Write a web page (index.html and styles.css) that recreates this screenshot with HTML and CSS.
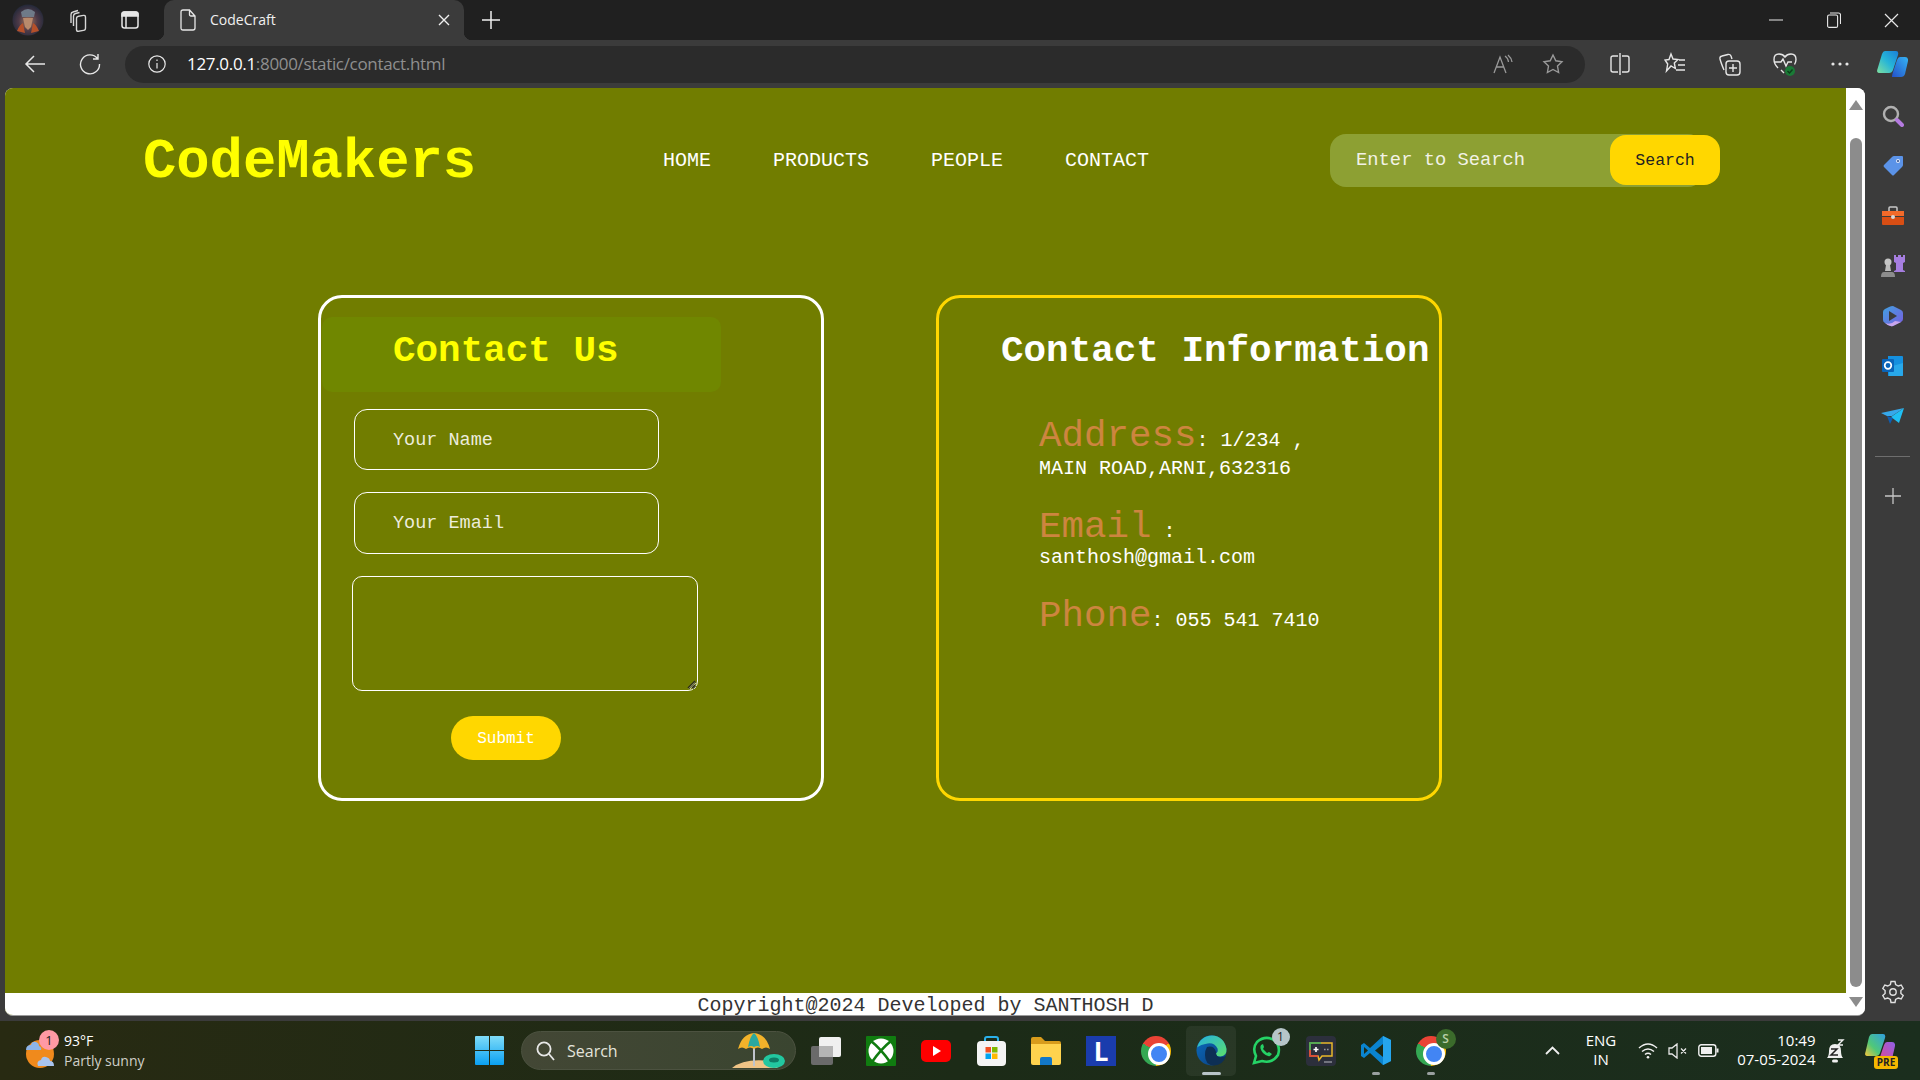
FILE: index.html
```html
<!DOCTYPE html>
<html lang="en">
<head>
<meta charset="utf-8">
<title>CodeCraft</title>
<link rel="stylesheet" href="styles.css">
</head>
<body>
<div class="tabstrip">
  <div class="avatar-btn"><svg width="32" height="32" viewBox="0 0 32 32"><defs><radialGradient id="av" cx="50%" cy="55%" r="55%"><stop offset="0" stop-color="#a8765a"/><stop offset=".55" stop-color="#4d3a48"/><stop offset="1" stop-color="#232838"/></radialGradient></defs><ellipse cx="16" cy="16" rx="15.500" ry="15.500" fill="url(#av)"/><path d="M9 8q7-6 14 0l-1 5H10z" fill="#6f7a88"/><path d="M11 14h10l-2 9-3 3-3-3z" fill="#b98a6c"/><path d="M5 27q3-7 6-8l2 10zM27 27q-3-7-6-8l-2 10z" fill="#b5502a"/></svg></div>
  <div class="strip-btn"><svg width="24" height="24" viewBox="0 0 24 24" fill="none" stroke="#d6d6d6" stroke-width="1.400"><path d="M5 15V6.500Q5 4.500 7 4l5-1.500M7.500 18V8q0-2 2-2.500l4-1"/><rect x="10.500" y="7" width="9" height="15" rx="2" transform="skewY(-10) translate(0 3.500)"/></svg></div>
  <div class="strip-btn"><svg width="20" height="20" viewBox="0 0 20 20" fill="none" stroke="#e6e6e6" stroke-width="1.500"><rect x="2" y="2" width="16" height="16" rx="2.500"/><path d="M2 4.500Q2 2 4.500 2h11Q18 2 18 4.500V6H2z" fill="#e6e6e6"/><path d="M6 6v12"/></svg></div>
  <div class="tab">
    <svg width="16" height="22" viewBox="0 0 16 22" fill="none" stroke="#e8e8e8" stroke-width="1.300"><path d="M3 1h6.500L15 7v12q0 2-2 2H3q-2 0-2-2V3q0-2 2-2zM9.500 1v4.500q0 1.500 1.500 1.500h4"/></svg>
    <span class="tab-title">CodeCraft</span>
    <svg class="tab-close" width="12" height="12" viewBox="0 0 12 12" stroke="#f0f0f0" stroke-width="1.400"><path d="M1 1l10 10M11 1L1 11"/></svg>
  </div>
  <div class="newtab"><svg width="18" height="18" viewBox="0 0 18 18" stroke="#f0f0f0" stroke-width="1.500"><path d="M9 0v18M0 9h18"/></svg></div>
  <div class="spacer"></div>
  <div class="winbtn"><svg width="14" height="2" viewBox="0 0 14 2" stroke="#e8e8e8"><path d="M0 1h14"/></svg></div>
  <div class="winbtn"><svg width="14" height="16" viewBox="0 0 14 16" fill="none" stroke="#e8e8e8" stroke-width="1.100"><rect x=".6" y="3" width="10" height="12.400" rx="1.500"/><path d="M3 1h8.500q2 0 2 2v9"/></svg></div>
  <div class="winbtn"><svg width="15" height="15" viewBox="0 0 15 15" stroke="#e8e8e8" stroke-width="1.200"><path d="M1 1l13 13M14 1L1 14"/></svg></div>
</div>

<div class="toolbar">
  <div class="nav-btn"><svg width="22" height="20" viewBox="0 0 22 20" fill="none" stroke="#e8e8e8" stroke-width="1.500"><path d="M21 10H2M10 2l-8 8 8 8"/></svg></div>
  <div class="nav-btn"><svg width="22" height="22" viewBox="0 0 22 22" fill="none" stroke="#e8e8e8" stroke-width="1.400"><path d="M18.500 5.500A9.500 9.500 0 1 0 20.500 11M19 1v5h-5"/></svg></div>
  <div class="addressbar">
    <svg class="info" width="18" height="18" viewBox="0 0 18 18" fill="none" stroke="#e8e8e8" stroke-width="1.200"><circle cx="9" cy="9" r="8.200"/><path d="M9 8v5.500M9 4.500v1.500"/></svg>
    <span class="url"><span class="url-host">127.0.0.1</span>:8000/static/contact.html</span>
    <div class="spacer"></div>
    <div class="addr-btn"><svg width="20" height="20" viewBox="0 0 20 20" fill="none" stroke="#9a9a9a" stroke-width="1.300"><path d="M1 19L7 3l6 16M3.500 13h7M12 2q3 2 3.500 6M15 1q3.500 3 4 7"/></svg></div>
    <div class="addr-btn"><svg width="22" height="22" viewBox="0 0 22 22" fill="none" stroke="#9a9a9a" stroke-width="1.400"><path d="M11 2l2.800 5.800 6.200.9-4.500 4.400 1.100 6.400-5.600-3-5.600 3 1.100-6.400L2 8.700l6.200-.9z"/></svg></div>
  </div>
  <div class="tool-btn tool-first"><svg width="20" height="24" viewBox="0 0 20 24" fill="none" stroke="#e6e6e6" stroke-width="1.400"><path d="M10 1v22M8 4H3Q1 4 1 6v12q0 2 2 2h5M12 4h5q2 0 2 2v12q0 2-2 2h-5"/></svg></div>
  <div class="tool-btn"><svg width="22" height="24" viewBox="0 0 22 24" fill="none" stroke="#e6e6e6" stroke-width="1.400"><path d="M7 2l2 5 5 .6-3.700 3.400 1 5.500L7 14l-4.500 5 1.200-7L1 8l4-.5zM15 8h6M14 13h7M12 18h9"/></svg></div>
  <div class="tool-btn"><svg width="24" height="24" viewBox="0 0 24 24" fill="none" stroke="#e6e6e6" stroke-width="1.400"><path d="M6 18Q3 11 2 7q-.5-2.500 2-3l6-1.500q2-.5 3 1.500l1 3"/><rect x="8" y="9" width="14" height="14" rx="3"/><path d="M15 12v8M11 16h8"/></svg></div>
  <div class="tool-btn"><svg width="24" height="26" viewBox="0 0 24 26" fill="none" stroke="#e6e6e6" stroke-width="1.400"><path d="M5 17Q1 13 1 8.500 1 3 6 3q4 0 6 3 2-3 6-3 5 0 5 5.500 0 2.500-1.500 5M1.500 11H8l2-3 3 7 2-4h4M8 19l3 3"/><circle cx="17" cy="20" r="5" fill="#1a7a36" stroke="none"/><path d="M14.500 20l2 2 3-3.500" stroke="#0d3d1b"/></svg></div>
  <div class="tool-btn"><svg width="18" height="4" viewBox="0 0 18 4" fill="#e6e6e6"><circle cx="2" cy="2" r="1.600"/><circle cx="9" cy="2" r="1.600"/><circle cx="16" cy="2" r="1.600"/></svg></div>
  <div class="tool-btn tool-last"><svg width="31" height="28" viewBox="0 0 31 28"><defs><linearGradient id="cp1" x1="0" y1="1" x2="1" y2="0"><stop offset="0" stop-color="#7fe0a0"/><stop offset=".5" stop-color="#26b5d8"/><stop offset="1" stop-color="#1a7fd8"/></linearGradient><linearGradient id="cp2" x1="0" y1="1" x2="1" y2="0"><stop offset="0" stop-color="#2450c8"/><stop offset="1" stop-color="#35b4f4"/></linearGradient></defs><path d="M8 1h11q3 0 2 4l-5 15q-1 3-4 3H3q-4 0-2.500-4L5 4q1-3 3-3z" fill="url(#cp1)"/><path d="M15 27h9q3 0 4-3l3-13q.5-4-3-4h-5q-2 0-3 3l-4 12q-1 3-1 5z" fill="url(#cp2)"/></svg></div>
</div>

<div class="workarea">
  <div class="viewport">
    <div class="page">
      <header class="site-header">
        <div class="logo">CodeMakers</div>
        <nav class="site-nav">
          <a>HOME</a>
          <a>PRODUCTS</a>
          <a>PEOPLE</a>
          <a>CONTACT</a>
        </nav>
        <form class="site-search">
          <input class="search-input" type="text" placeholder="Enter to Search">
          <button class="search-button" type="button">Search</button>
        </form>
      </header>
      <main class="cards">
        <section class="card card-form">
          <h2 class="form-title">Contact Us</h2>
          <form class="contact-form">
            <input class="field field-name" type="text" placeholder="Your Name">
            <input class="field field-email" type="email" placeholder="Your Email">
            <div class="message-wrap">
              <textarea class="message"></textarea>
              <svg class="grip" width="9" height="9" viewBox="0 0 9 9" fill="none"><path d="M1 8l7-7" stroke="#2d2d1a" stroke-width="1.600"/><path d="M5 8l3-3" stroke="#2d2d1a" stroke-width="1.400"/><path d="M2 8.500l6-6" stroke="#d8d8c8" stroke-width=".7"/></svg>
            </div>
            <button class="submit" type="button">Submit</button>
          </form>
        </section>
        <section class="card card-info">
          <h2 class="info-title">Contact Information</h2>
          <div class="info-list">
            <p class="info-item"><span class="info-label">Address</span>: 1/234 , MAIN ROAD,ARNI,632316</p>
            <p class="info-item info-item-tight"><span class="info-label">Email</span> : santhosh@gmail.com</p>
            <p class="info-item"><span class="info-label">Phone</span>: 055 541 7410</p>
          </div>
        </section>
      </main>
      <footer class="site-footer">Copyright@2024 Developed by SANTHOSH D</footer>
    </div>
    <div class="scrollbar">
      <div class="arrow-up"></div>
      <div class="thumb"></div>
      <div class="arrow-down"></div>
    </div>
  </div>
  <aside class="sidebar">
    <div class="side-icon"><svg width="22" height="22" viewBox="0 0 22 22" fill="none"><circle cx="9" cy="9" r="7" stroke="#b0b0b0" stroke-width="2.400"/><path d="M15 15l5 5" stroke="#b57be0" stroke-width="4" stroke-linecap="round"/></svg></div>
    <div class="side-icon"><svg width="22" height="22" viewBox="0 0 22 22"><path d="M12 1h8q1 0 1 1v8q0 1-1 2l-8 8q-1 1-2 0l-8-8q-1-1 0-2l8-8q1-1 2-1z" fill="#5b93e8"/><circle cx="16" cy="6" r="2" fill="#dfe8f8"/><circle cx="16" cy="6" r="1" fill="#2e4d88"/></svg></div>
    <div class="side-icon"><svg width="24" height="20" viewBox="0 0 24 20"><path d="M8 5V2q0-1 1-1h6q1 0 1 1v3" fill="none" stroke="#c8c8c8" stroke-width="1.500"/><path d="M1 5h22v5H1z" fill="#f26a2a"/><path d="M1 11h22v7q0 1-1 1H2q-1 0-1-1z" fill="#d84e14"/><circle cx="12" cy="11" r="2" fill="#d9d9d9"/></svg></div>
    <div class="side-icon"><svg width="24" height="24" viewBox="0 0 24 24"><path d="M13 1h2v2h2V1h3v2h2V1h2v7l-2 1v7l2 1v1H13v-1l2-1V9l-2-1z" fill="#a67ee0"/><circle cx="7" cy="8" r="3.500" fill="#c4c4c4"/><path d="M5 11h4l1 6H4z" fill="#bcbcbc"/><path d="M0 23q0-5 3-5h8q3 0 3 5z" fill="#8c8c8c"/></svg></div>
    <div class="side-icon"><svg width="22" height="22" viewBox="0 0 22 22"><defs><linearGradient id="ms1" x1="0" y1="0" x2="1" y2="1"><stop offset="0" stop-color="#3fa2e0"/><stop offset="1" stop-color="#7a5ce0"/></linearGradient></defs><path d="M11 1l8 4q2 1 2 3v6q0 2-2 3l-8 4q-2 .5-4-.5L3 18q-2-1-2-3V7q0-2 2-3l4-2q2-1 4-1z" fill="url(#ms1)"/><path d="M7 6l8 5-8 5z" fill="#3c3c3c"/><path d="M3 18q6 2 10-2l6 1-8 4q-4 1-8-3z" fill="#c9a6ec"/></svg></div>
    <div class="side-icon"><svg width="22" height="22" viewBox="0 0 22 22"><path d="M7 1h13q1 0 1 1v18q0 1-1 1H6V1z" fill="#1490df"/><path d="M7 12l14-4v12q0 1-1 1H7z" fill="#28a8ea"/><rect x="0" y="4" width="12" height="13" rx="1" fill="#0a64b8"/><circle cx="6" cy="10.500" r="3.300" fill="none" stroke="#fff" stroke-width="1.700"/></svg></div>
    <div class="side-icon"><svg width="24" height="18" viewBox="0 0 24 18"><path d="M0 6l23-5-12 8-5 0z" fill="#36a8ea"/><path d="M23 1l-5 15-8-6z" fill="#1fc0f4"/><path d="M6 9l3 8 3-6z" fill="#0f5cb0"/></svg></div>
    <div class="side-divider"></div>
    <div class="side-plus"><svg width="16" height="16" viewBox="0 0 16 16" stroke="#c6c6c6" stroke-width="1.300"><path d="M8 0v16M0 8h16"/></svg></div>
    <div class="spacer"></div>
    <div class="side-gear"><svg width="22" height="24" viewBox="0 0 22 24" fill="none" stroke="#e0e0e0" stroke-width="1.400"><path d="M9 1.500h4l.6 3 2.700 1.500 2.900-1 2 3.500-2.300 2v3l2.300 2-2 3.500-2.900-1-2.700 1.500-.6 3H9l-.6-3-2.700-1.500-2.900 1-2-3.500 2.300-2v-3l-2.300-2 2-3.500 2.900 1 2.700-1.500z"/><circle cx="11" cy="12" r="3.200"/></svg></div>
  </aside>
</div>

<div class="taskbar">
  <div class="weather">
    <div class="weather-icon">
      <svg width="32" height="36" viewBox="0 0 32 36"><circle cx="15" cy="21" r="14" fill="#f08a1c"/><path d="M1 17q0-5 5-5 1-4 5-3 3 1 3 4 3 1 2 4z" fill="#8db4e8"/><path d="M13 33q-2-5 3-6 1-4 5-3 4 1 4 4 4 0 4 5z" fill="#a8c4ee"/></svg>
      <span class="weather-badge">1</span>
    </div>
    <div class="weather-text"><span class="weather-temp">93°F</span><span class="weather-desc">Partly sunny</span></div>
  </div>
  <svg class="winlogo" width="29" height="29" viewBox="0 0 29 29"><defs><linearGradient id="wl" x1="0" y1="0" x2="0" y2="1"><stop offset="0" stop-color="#7fdcf8"/><stop offset="1" stop-color="#0aa0f2"/></linearGradient></defs><path d="M1 0h13v14H0V1q0-1 1-1zM15 0h13q1 0 1 1v13H15zM0 15h14v14H1q-1 0-1-1zM15 15h14v13q0 1-1 1H15z" fill="url(#wl)"/></svg>
  <div class="task-search">
    <svg width="19" height="20" viewBox="0 0 19 20" fill="none" stroke="#e8e8e8" stroke-width="1.800"><circle cx="8" cy="8" r="6.600"/><path d="M13 13l5 6"/></svg>
    <span class="task-search-label">Search</span>
    <div class="spacer"></div>
    <svg width="56" height="38" viewBox="0 0 56 38"><path d="M2 36q12-10 38-7l8 7z" fill="#f0c486"/><path d="M24 12v22" stroke="#bfc4cc" stroke-width="2"/><path d="M8 17Q12 2 24 1q12 1 16 16-4-3-8 0-4-3-8 0-4-3-8 0-4-3-8 0z" fill="#f2b22a"/><path d="M18 15Q20 4 24 1q4 3 6 14-3-2-6 0-3-2-6 0z" fill="#2aa8a0"/><ellipse cx="44" cy="29" rx="11" ry="7" fill="#22c7a0"/><ellipse cx="44" cy="28" rx="5" ry="2.500" fill="#0f7c66"/></svg>
  </div>
  <div class="task-icons">
    <div class="task-item"><svg width="30" height="28" viewBox="0 0 30 28"><rect y="9" width="22" height="19" rx="2" fill="#6a6a6a"/><rect x="8" width="22" height="20" rx="2" fill="#f0f0f0"/><rect x="8" y="9" width="14" height="11" fill="#b4b4b4"/></svg></div>
    <div class="task-item"><svg width="30" height="30" viewBox="0 0 30 30" fill="none"><rect width="30" height="30" rx="1" fill="#107c10"/><circle cx="15" cy="15" r="12.500" fill="#fff"/><path d="M5 5Q15 13 24 26M25 5Q15 13 6 26" stroke="#107c10" stroke-width="2.600"/></svg></div>
    <div class="task-item"><svg width="30" height="22" viewBox="0 0 30 22"><rect width="30" height="22" rx="5" fill="#f00"/><path d="M12 6l8 5-8 5z" fill="#fff"/></svg></div>
    <div class="task-item"><svg width="29" height="30" viewBox="0 0 29 30"><path d="M8 6V3q0-2 2-2h9q2 0 2 2v3" fill="none" stroke="#2ab0ea" stroke-width="2"/><rect y="5" width="29" height="25" rx="4" fill="#f4f4f4"/><rect x="8.500" y="11" width="5.500" height="5.500" fill="#f25022"/><rect x="15" y="11" width="5.500" height="5.500" fill="#7fba00"/><rect x="8.500" y="17.500" width="5.500" height="5.500" fill="#00a4ef"/><rect x="15" y="17.500" width="5.500" height="5.500" fill="#ffb900"/></svg></div>
    <div class="task-item"><svg width="30" height="28" viewBox="0 0 30 28"><path d="M0 2q0-2 2-2h8l4 4h14q2 0 2 2v4H0z" fill="#d89c1c"/><path d="M0 7h30v19q0 2-2 2H2q-2 0-2-2z" fill="#ffd34e"/><path d="M9 22q0-2 2-2h8q2 0 2 2v6H9z" fill="#1278c8"/></svg></div>
    <div class="task-item"><span class="app-l">L</span></div>
    <div class="task-item"><span class="chrome"></span></div>
    <div class="task-item task-active"><svg width="31" height="31" viewBox="0 0 31 31"><defs><linearGradient id="ed1" x1="0" y1="0" x2="1" y2="1"><stop offset="0" stop-color="#0a6cc0"/><stop offset="1" stop-color="#0c3c78"/></linearGradient><linearGradient id="ed2" x1="0" y1="0" x2="1" y2="1"><stop offset="0" stop-color="#25b0e0"/><stop offset="1" stop-color="#5ce06c"/></linearGradient></defs><circle cx="15.500" cy="15.500" r="15" fill="url(#ed1)"/><path d="M1 13Q4 1 16 .5 28 1 30.500 14q.5 7-6 7.500-5 0-5-3 3-1 2-5-3-6-10-5-7 1-10.500 4z" fill="url(#ed2)"/><path d="M11 12q7-2 9 5 0 8 10 4-3 9-12 9.500Q9 30 9 20q0-5 2-8z" fill="#0d2f55"/></svg><span class="task-pill task-pill-wide"></span></div>
    <div class="task-item"><svg width="30" height="30" viewBox="0 0 30 30" fill="none"><path d="M3 27l2-7Q1 12 6 6q8-7 17-2 7 6 4 15-6 9-16 6z" stroke="#25d366" stroke-width="2.600"/><path d="M10 9q-2 3 2 8 4 4 7 3l2-2-3-2-2 1-4-4 1-2-1-3z" fill="#25d366"/></svg><span class="wa-badge">1</span></div>
    <div class="task-item"><svg width="30" height="30" viewBox="0 0 30 30"><rect width="30" height="30" rx="4" fill="#2c2f3c"/><path d="M4 7h22v13H16l-3 4-1-4H4z" fill="none" stroke="#e8b82a" stroke-width="1.500"/><path d="M4 14V7h11" fill="none" stroke="#38b060" stroke-width="1.500"/><path d="M4 14v6h8" fill="none" stroke="#e03c3c" stroke-width="1.500"/><path d="M10 11v5M7.500 13.500h5M18.500 13.500h.8M21.500 13.500h.8" stroke="#fff" stroke-width="1.600"/><path d="M18 26h8" stroke="#8a8c94" stroke-width="1.500"/></svg></div>
    <div class="task-item"><svg width="31" height="31" viewBox="0 0 31 31"><path d="M22 1l8 4v21l-8 4-13-12-6 5-3-2V10l3-2 6 5z" fill="#0a84d0"/><path d="M22 1l8 4v21l-8 4z" fill="#26a6ee"/><path d="M22 9l-8 6.500 8 6.500z" fill="#1c2b17"/><path d="M3 12l4 3.500-4 3.500z" fill="#1c2b17"/></svg><span class="task-pill"></span></div>
    <div class="task-item"><span class="chrome"></span><span class="s-badge">S</span><span class="task-pill"></span></div>
  </div>
  <div class="tray-chevron"><svg width="15" height="9" viewBox="0 0 15 9" fill="none" stroke="#f0f0f0" stroke-width="1.800"><path d="M1 8l6.500-6.500L14 8"/></svg></div>
  <div class="tray-lang"><span>ENG</span><span>IN</span></div>
  <div class="tray-icon tray-wifi"><svg width="20" height="17" viewBox="0 0 20 17" fill="none" stroke="#f0f0f0" stroke-width="1.500"><path d="M1 6q9-8 18 0M4 9.500q6-5 12 0M7 12.500q3-2.500 6 0"/><circle cx="10" cy="15.300" r="1.300" fill="#f0f0f0" stroke="none"/></svg></div>
  <div class="tray-icon"><svg width="20" height="16" viewBox="0 0 20 16" fill="none" stroke="#e8e8e8" stroke-width="1.300"><path d="M1 5h3l5-4v14l-5-4H1zM13 5.500l5 5M18 5.500l-5 5"/></svg></div>
  <div class="tray-icon"><svg width="21" height="13" viewBox="0 0 21 13" fill="none"><rect x=".8" y=".8" width="17" height="11.400" rx="2.500" stroke="#f0f0f0" stroke-width="1.400"/><rect x="3" y="3" width="11" height="7" fill="#f0f0f0"/><path d="M19.500 4.500v4" stroke="#f0f0f0" stroke-width="2"/></svg></div>
  <div class="tray-clock"><span>10:49</span><span>07-05-2024</span></div>
  <div class="tray-bell"><svg width="20" height="26" viewBox="0 0 20 26"><path d="M2 20q2-2 2-7 0-7 6-7t6 7q0 5 2 7z" fill="#f0f0f0"/><rect x="7" y="21.500" width="6" height="3" rx="1.500" fill="#f0f0f0"/><path d="M6 11h6l-6 6h7" fill="none" stroke="#222" stroke-width="1.500"/><path d="M13 2h5l-5 5h5" fill="none" stroke="#f0f0f0" stroke-width="1.400"/></svg></div>
  <div class="tray-copilot"><svg width="30" height="30" viewBox="0 0 30 30"><defs><linearGradient id="cq" x1="0" y1="1" x2="1" y2="0"><stop offset="0" stop-color="#f7c63c"/><stop offset=".4" stop-color="#50c878"/><stop offset="1" stop-color="#30a0e0"/></linearGradient><linearGradient id="cr" x1="0" y1="1" x2="1" y2="0"><stop offset="0" stop-color="#e04890"/><stop offset="1" stop-color="#9060e8"/></linearGradient></defs><path d="M7 1h11q3 0 2 4l-5 15q-1 3-4 3H3q-4 0-2.500-4L4 4q1-3 3-3z" fill="url(#cq)"/><path d="M14 29h9q3 0 4-3l3-13q.5-4-3-4h-5q-2 0-3 3l-4 12q-1 3-1 5z" fill="url(#cr)"/></svg><span class="pre-badge">PRE</span></div>
</div>
</body>
</html>
```
FILE: styles.css
```css
* { box-sizing: border-box; }
html, body { margin: 0; height: 100%; }
body {
  width: 1920px;
  height: 1080px;
  overflow: hidden;
  display: flex;
  flex-direction: column;
  background: #3b3b3b;
  font-family: "Open Sans", "Noto Sans", sans-serif;
}
.spacer { flex: 1; }

/* browser tab strip */
.tabstrip {
  height: 40px;
  flex: none;
  display: flex;
  align-items: center;
  padding-left: 3px;
  background: #202020;
}
.avatar-btn { width: 49px; display: flex; justify-content: center; }
.strip-btn { width: 52px; display: flex; justify-content: center; }
.tab {
  position: relative;
  width: 300px;
  height: 40px;
  margin-left: 8px;
  padding: 0 14px 0 16px;
  display: flex;
  align-items: center;
  gap: 14px;
  background: #3b3b3b;
  border-radius: 10px 10px 0 0;
}
.tab::before, .tab::after {
  content: "";
  position: absolute;
  bottom: 0;
  width: 8px;
  height: 8px;
}
.tab::before { left: -8px; background: radial-gradient(circle at 0 0, #202020 8px, #3b3b3b 8.500px); }
.tab::after { right: -8px; background: radial-gradient(circle at 100% 0, #202020 8px, #3b3b3b 8.500px); }
.tab-title { font-size: 14px; line-height: 18px; padding-bottom: 1px; color: #f0f0f0; }
.tab-close { margin-left: auto; }
.newtab { width: 54px; display: flex; justify-content: center; }
.winbtn { width: 57.500px; display: flex; justify-content: center; }

/* browser toolbar */
.toolbar {
  height: 48px;
  flex: none;
  display: flex;
  align-items: center;
  padding-left: 7px;
  background: #3b3b3b;
}
.nav-btn { width: 55px; flex: none; display: flex; justify-content: center; }
.addressbar {
  width: 1460px;
  height: 37px;
  flex: none;
  margin-left: 8px;
  padding: 0 7px 0 23px;
  display: flex;
  align-items: center;
  border-radius: 18.500px;
  background: #2b2b2b;
}
.url {
  margin-left: 21px;
  padding-bottom: 2px;
  font-size: 17px;
  letter-spacing: -.32px;
  color: #8f8f8f;
}
.url-host { color: #fff; }
.addr-btn { width: 50px; display: flex; justify-content: center; }
.tool-btn { width: 55px; flex: none; display: flex; justify-content: center; }
.tool-first { margin-left: 7px; }
.tool-last { width: 50px; }

/* workspace */
.workarea {
  height: 928px;
  flex: none;
  display: flex;
  padding-left: 5px;
}
.viewport {
  width: 1860px;
  flex: none;
  display: flex;
  border-radius: 8px;
  overflow: hidden;
  background: #fff;
  border-bottom: 1px solid #9a9a9a;
}
.page {
  width: 1841px;
  flex: none;
  display: flex;
  flex-direction: column;
  font-family: "Liberation Mono", "Courier New", monospace;
  background: #717d00;
}
.scrollbar {
  width: 19px;
  flex: none;
  display: flex;
  flex-direction: column;
  align-items: center;
  background: #fff;
  padding-top: 12px;
}
.arrow-up {
  width: 0;
  height: 0;
  border-left: 7px solid transparent;
  border-right: 7px solid transparent;
  border-bottom: 10px solid #8c8c8c;
}
.thumb {
  width: 12px;
  height: 849px;
  margin-top: 28px;
  border-radius: 6px;
  background: #8c8c8c;
}
.arrow-down {
  width: 0;
  height: 0;
  margin-top: 10px;
  border-left: 7px solid transparent;
  border-right: 7px solid transparent;
  border-top: 10px solid #8c8c8c;
}

/* site header */
.site-header {
  height: 144px;
  flex: none;
  display: flex;
  align-items: center;
  padding-left: 138px;
}
.logo {
  width: 336px;
  padding-top: 4px;
  font-size: 55.500px;
  font-weight: 700;
  color: #ff0;
}
.site-nav {
  margin-left: 184px;
  display: flex;
  gap: 62px;
  font-size: 20px;
  color: #fff;
}
.site-search {
  margin-left: 181px;
  display: flex;
  align-items: center;
}
.search-input {
  width: 374px;
  height: 53px;
  padding: 0 0 0 26px;
  border: 0;
  border-radius: 16px;
  background: #8da033;
  font-family: inherit;
  font-size: 18.800px;
  color: #fff;
  outline: 0;
}
.search-input::placeholder { color: #f2f2e6; opacity: 1; }
.search-button {
  width: 110px;
  height: 50px;
  margin-left: -94px;
  padding: 0;
  border: 0;
  border-radius: 16px;
  background: #ffd700;
  font-family: inherit;
  font-size: 16.500px;
  color: #222;
}

/* cards */
.cards {
  flex: 1;
  display: flex;
  align-items: flex-start;
  gap: 112px;
  padding: 63px 0 0 313px;
}
.card {
  width: 506px;
  height: 506px;
  border: 3px solid #fff;
  border-radius: 24px;
}
.card-info { border-color: #ffd700; }
.form-title {
  width: 399px;
  height: 75px;
  margin: 19px 0 0 1px;
  padding: 2px 0 0 71px;
  border-radius: 10px;
  background: #708700;
  font-size: 37.600px;
  line-height: 64px;
  color: #ff0;
}
.contact-form {
  display: flex;
  flex-direction: column;
  align-items: flex-start;
}
.field {
  width: 305px;
  margin-left: 33px;
  padding: 0 0 0 38px;
  border: 1px solid #fff;
  border-radius: 13px;
  background: transparent;
  font-family: inherit;
  font-size: 18.500px;
  color: #fff;
  outline: 0;
}
.field::placeholder { color: #ececdc; opacity: 1; }
.field-name { height: 61px; margin-top: 17px; padding-top: 1px; }
.field-email { height: 62px; margin-top: 22px; }
.message-wrap {
  position: relative;
  width: 346px;
  height: 115px;
  margin: 22px 0 0 31px;
}
.message {
  display: block;
  width: 346px;
  height: 115px;
  border: 1px solid #fff;
  border-radius: 10px;
  background: transparent;
  outline: 0;
}
.grip {
  position: absolute;
  right: 2px;
  bottom: 2px;
}
.submit {
  width: 110px;
  height: 44px;
  margin: 25px 0 0 130px;
  padding: 2px 0 0;
  border: 0;
  border-radius: 22px;
  background: #ffd700;
  font-family: inherit;
  font-size: 16px;
  color: #fff;
}
.info-title {
  margin: 21px 0 0 62px;
  font-size: 37.600px;
  line-height: 64px;
  color: #fff;
  white-space: nowrap;
}
.info-list {
  width: 300px;
  margin: 39px 0 0 100px;
}
.info-item {
  margin: 0 0 31px;
  font-size: 20px;
  line-height: 28px;
  color: #fff;
}
.info-item-tight { line-height: 26px; }
.info-label {
  font-size: 37.500px;
  color: #cd853f;
}

.site-footer {
  height: 22px;
  flex: none;
  padding-top: 3px;
  background: #fff;
  color: #333;
  font-size: 20px;
  line-height: 19px;
  text-align: center;
}

/* edge sidebar */
.sidebar {
  width: 55px;
  flex: none;
  display: flex;
  flex-direction: column;
  align-items: center;
  padding-top: 3px;
}
.side-icon {
  height: 50px;
  display: flex;
  align-items: center;
  justify-content: center;
}
.side-divider {
  width: 35px;
  height: 1px;
  margin-top: 15px;
  background: #6e6e6e;
}
.side-plus { margin-top: 31px; display: flex; }
.side-gear { margin-bottom: 12px; display: flex; }

/* windows taskbar */
.taskbar {
  height: 59px;
  flex: none;
  margin-top: 5px;
  display: flex;
  align-items: center;
  padding-left: 25px;
  background: linear-gradient(90deg, #282a12 0%, #1c2b17 50%, #1b2e1e 100%);
  color: #fff;
}
.weather {
  width: 450px;
  flex: none;
  display: flex;
  align-items: center;
  gap: 7px;
}
.weather-icon { position: relative; display: flex; }
.weather-badge {
  position: absolute;
  top: -3px;
  left: 14px;
  width: 20px;
  height: 20px;
  border-radius: 50%;
  background: #ff99a4;
  color: #222;
  font-size: 13px;
  line-height: 20px;
  text-align: center;
}
.weather-text { display: flex; flex-direction: column; font-size: 14px; line-height: 20px; }
.weather-desc { color: #cfcfc8; }
.winlogo { flex: none; }
.task-search {
  width: 275px;
  height: 39px;
  flex: none;
  margin-left: 17px;
  padding: 0 9px 0 14px;
  display: flex;
  align-items: center;
  border-radius: 20px;
  background: linear-gradient(90deg, #434735, #3a4530);
  border: 1px solid #4c5240;
}
.task-search-label { margin-left: 12px; font-size: 16px; color: #e4e4dc; }
.task-icons { margin-left: 2.500px; display: flex; flex: none; }
.task-item {
  position: relative;
  width: 55px;
  height: 50px;
  display: flex;
  align-items: center;
  justify-content: center;
}
.task-active { background: rgba(255, 255, 255, .06); border-radius: 5px; width: 50px; margin: 0 2.500px; }
.task-pill {
  position: absolute;
  bottom: 1px;
  left: 50%;
  width: 8px;
  height: 3px;
  margin-left: -4px;
  border-radius: 2px;
  background: #9aa0a0;
}
.task-pill-wide { width: 19px; margin-left: -9.500px; background: #b8c4c8; }
.app-l {
  width: 30px;
  height: 30px;
  background: #1a3cad;
  color: #fff;
  font: 700 26px/30px "Open Sans", sans-serif;
  text-align: center;
}
.chrome {
  position: relative;
  width: 30px;
  height: 30px;
  border-radius: 50%;
  background: conic-gradient(from -60deg, #ea4335 0 120deg, #fbbc05 120deg 240deg, #34a853 240deg 360deg);
}
.chrome::after {
  content: "";
  position: absolute;
  left: 7px;
  top: 7px;
  width: 16px;
  height: 16px;
  border-radius: 50%;
  background: #4285f4;
  border: 3px solid #fff;
}
.wa-badge {
  position: absolute;
  top: 2px;
  right: 4px;
  width: 18px;
  height: 18px;
  border-radius: 50%;
  background: #b7c5c9;
  color: #222;
  font-size: 12px;
  line-height: 18px;
  text-align: center;
}
.s-badge {
  position: absolute;
  top: 3px;
  right: 3px;
  width: 20px;
  height: 20px;
  border-radius: 50%;
  background: #3b6b2b;
  color: #b8d0a8;
  font-size: 12px;
  font-weight: 600;
  line-height: 20px;
  text-align: center;
}
.tray-chevron { width: 30px; margin-left: 79px; display: flex; justify-content: center; }
.tray-lang {
  width: 40px;
  margin-left: 13.500px;
  padding-bottom: 2px;
  display: flex;
  flex-direction: column;
  align-items: center;
  font-size: 15px;
  line-height: 19px;
}
.tray-icon { width: 30px; display: flex; justify-content: center; }
.tray-wifi { margin-left: 12px; }
.tray-clock {
  width: 92.500px;
  padding-bottom: 2px;
  display: flex;
  flex-direction: column;
  align-items: flex-end;
  font-size: 15px;
  line-height: 19px;
}
.tray-bell { width: 24px; margin-left: 7.500px; display: flex; justify-content: center; }
.tray-copilot {
  position: relative;
  width: 36px;
  margin-left: 15px;
  display: flex;
  justify-content: center;
  padding-bottom: 6px;
}
.pre-badge {
  position: absolute;
  right: 0;
  bottom: 0;
  width: 24px;
  height: 13px;
  border-radius: 3px;
  background: #f5b800;
  color: #222;
  font-size: 10px;
  font-weight: 700;
  line-height: 13px;
  text-align: center;
}
```
